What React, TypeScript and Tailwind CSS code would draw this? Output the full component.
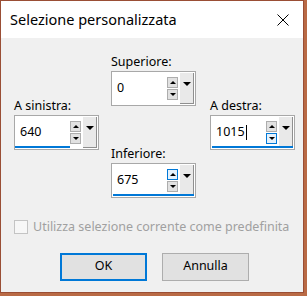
import React from "react";

type SpinProps = {
  label: string;
  value: string;
  underline?: "text" | "full" | "none";
  hot?: "up" | "down" | null;
  caret?: boolean;
};

function Arrow({ dir, size = 4 }: { dir: "up" | "down"; size?: number }) {
  return dir === "up" ? (
    <span
      className="block w-0 h-0 border-l-transparent border-r-transparent border-b-black"
      style={{ borderLeftWidth: size, borderRightWidth: size, borderBottomWidth: size, borderStyle: "solid" }}
    />
  ) : (
    <span
      className="block w-0 h-0 border-l-transparent border-r-transparent border-t-black"
      style={{ borderLeftWidth: size, borderRightWidth: size, borderTopWidth: size, borderStyle: "solid" }}
    />
  );
}

function SpinBtn({ dir, hot }: { dir: "up" | "down"; hot: boolean }) {
  return (
    <div
      className={
        "w-[11px] h-[11px] border flex items-center justify-center " +
        (hot ? "border-[#0078d7] bg-[#e5f1fb]" : "border-[#adadad] bg-[#e1e1e1]")
      }
    >
      <Arrow dir={dir} size={3} />
    </div>
  );
}

function SpinField({ label, value, underline = "none", hot = null, caret = false }: SpinProps) {
  return (
    <div className="flex flex-col w-[85px]">
      <div className="h-[16px] text-[12.5px] leading-[16px] text-black">{label}</div>
      <div className="relative mt-px h-[35px] border border-[#a8a8a8] bg-white flex">
        <div className="relative flex-1 flex items-center pl-[5px] text-[12.5px] text-black">
          {value}
          {caret && <span className="inline-block w-px h-[15px] bg-black ml-px" />}
          {underline === "text" && <div className="absolute left-0 right-0 bottom-px h-[2px] bg-[#0078d7]" />}
        </div>
        <div className="flex flex-col justify-center gap-[1px] w-[11px]">
          <SpinBtn dir="up" hot={hot === "up"} />
          <SpinBtn dir="down" hot={hot === "down"} />
        </div>
        <div className="ml-[2px] mr-px my-px w-[14px] bg-[#e9e9e9] border-r border-b border-[#8f8f8f] flex justify-center pt-[9px]">
          <Arrow dir="down" size={4} />
        </div>
        {underline === "full" && <div className="absolute left-px right-px bottom-px h-[2px] bg-[#0078d7]" />}
      </div>
    </div>
  );
}

export default function App() {
  const font = { fontFamily: '"Noto Sans", "Liberation Sans", sans-serif' };
  return (
    <div className="w-[307px] h-[296px] bg-[#b96a45] overflow-hidden" style={font}>
      <div className="w-[304px] h-[293px] border border-[#9a4e35] flex flex-col">
        <div className="h-[37px] bg-white flex items-center justify-between pl-[9px] pr-[14px]">
          <span className="text-[14.5px] text-black">Selezione personalizzata</span>
          <svg width="12" height="12" viewBox="0 0 12 12">
            <path d="M0.5 0.5 L11.5 11.5 M11.5 0.5 L0.5 11.5" stroke="#000" strokeWidth="1" />
          </svg>
        </div>
        <div className="flex-1 bg-[#f0f0f0] flex flex-col">
          <div className="flex pl-[13px] pt-[16px]">
            <div className="pt-[44px]">
              <SpinField label="A sinistra:" value="640" underline="text" />
            </div>
            <div className="ml-[12px] flex flex-col">
              <SpinField label="Superiore:" value="0" />
              <div className="mt-[40px]">
                <SpinField label="Inferiore:" value="675" underline="full" hot="up" />
              </div>
            </div>
            <div className="ml-[14px] pt-[44px]">
              <SpinField label="A destra:" value="1015" underline="full" hot="down" caret />
            </div>
          </div>
          <div className="flex items-center mt-[20px] pl-[13px]">
            <div className="w-[14px] h-[14px] border border-[#c4c4c4] bg-[#f7f7f7]" />
            <span className="ml-[5px] text-[12.5px] text-[#a0a0a0]">Utilizza selezione corrente come predefinita</span>
          </div>
          <div className="flex mt-[16px] pl-[59px] gap-[15px]">
            <button className="w-[87px] h-[28px] border-2 border-[#0078d7] bg-[#e1e1e1] text-[12.5px] text-black">OK</button>
            <button className="w-[87px] h-[28px] border border-[#adadad] bg-[#e1e1e1] text-[12.5px] text-black">Annulla</button>
          </div>
        </div>
      </div>
    </div>
  );
}
